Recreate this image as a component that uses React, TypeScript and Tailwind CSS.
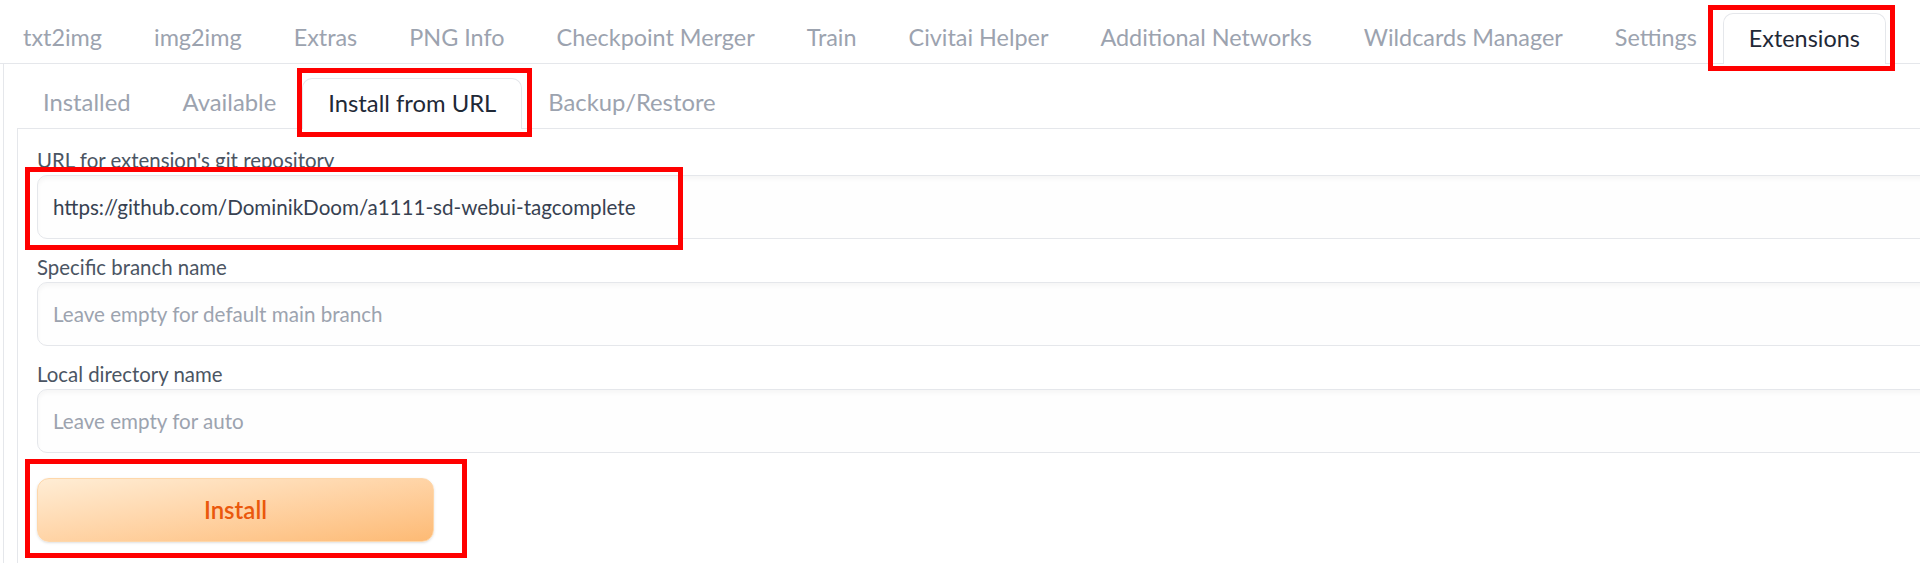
import React from "react";

const topTabs = [
  "txt2img",
  "img2img",
  "Extras",
  "PNG Info",
  "Checkpoint Merger",
  "Train",
  "Civitai Helper",
  "Additional Networks",
  "Wildcards Manager",
  "Settings",
  "Extensions",
];

const subTabs = ["Installed", "Available", "Install from URL", "Backup/Restore"];

function Tab({ label, active }: { label: string; active: boolean }) {
  if (active) {
    return (
      <div className="flex items-center h-[51px] mb-[-1px] px-[25px] bg-white border border-b-0 border-[#e5e7eb] rounded-t-[10px] text-[#1f2937] whitespace-nowrap">
        {label}
      </div>
    );
  }
  return (
    <div className="flex items-center h-[51px] px-[26px] text-[#9ca3af] whitespace-nowrap">
      {label}
    </div>
  );
}

function Field({
  label,
  value,
  placeholder,
}: {
  label: string;
  value?: string;
  placeholder: string;
}) {
  return (
    <div className="flex flex-col">
      <span className="text-[20.4px] leading-[26px] text-[#4b5563] mb-[2px]">
        {label}
      </span>
      <input
        readOnly
        value={value ?? ""}
        placeholder={placeholder}
        className="w-[1960px] h-[64px] pl-[15px] rounded-[10px] border border-[#e5e7eb] bg-[#fefefe] shadow-[inset_0_3px_4px_rgba(0,0,0,0.035)] text-[20.6px] text-[#374151] placeholder:text-[#9ca3af] outline-none"
      />
    </div>
  );
}

function RedBox({ className }: { className: string }) {
  return (
    <div
      className={
        "absolute border-[5px] border-[#ff0000] pointer-events-none " +
        className
      }
    />
  );
}

export default function App() {
  return (
    <div
      className="relative w-[1920px] h-[563px] overflow-hidden bg-white"
      style={{ fontFamily: "Lato, 'Noto Sans', sans-serif" }}
    >
      {/* top tabs */}
      <div className="flex items-end h-[64px] border-b border-[#e5e7eb] text-[23.4px] leading-none">
        <div className="flex items-end ml-[-3px]">
          {topTabs.map((t) => (
            <Tab key={t} label={t} active={t === "Extensions"} />
          ))}
        </div>
      </div>

      {/* outer panel */}
      <div className="ml-[3px] border-l border-[#e5e7eb] pl-[13px] pt-[15px] h-full">
        <div className="flex items-end h-[50px] border-b border-[#e5e7eb] text-[23.8px] leading-none">
          {subTabs.map((t) => (
            <Tab key={t} label={t} active={t === "Install from URL"} />
          ))}
        </div>

        {/* inner panel */}
        <div className="border-l border-[#e5e7eb] pl-[19px] pt-[18px] h-full flex flex-col gap-[15px]">
          <Field
            label="URL for extension's git repository"
            value="https://github.com/DominikDoom/a1111-sd-webui-tagcomplete"
            placeholder=""
          />
          <Field
            label="Specific branch name"
            placeholder="Leave empty for default main branch"
          />
          <Field label="Local directory name" placeholder="Leave empty for auto" />
          <button className="mt-[10px] w-[397px] h-[64px] rounded-[12px] border border-[#fed7aa] bg-linear-to-br from-[#ffedd5] to-[#fdba74] shadow-sm text-[24px] font-semibold text-[#ea580c]">
            Install
          </button>
        </div>
      </div>

      {/* annotation boxes */}
      <RedBox className="left-[1708px] top-[5px] w-[187px] h-[66px]" />
      <RedBox className="left-[297px] top-[68px] w-[235px] h-[69px]" />
      <RedBox className="left-[25px] top-[167px] w-[658px] h-[83px]" />
      <RedBox className="left-[25px] top-[459px] w-[442px] h-[99px]" />
    </div>
  );
}
